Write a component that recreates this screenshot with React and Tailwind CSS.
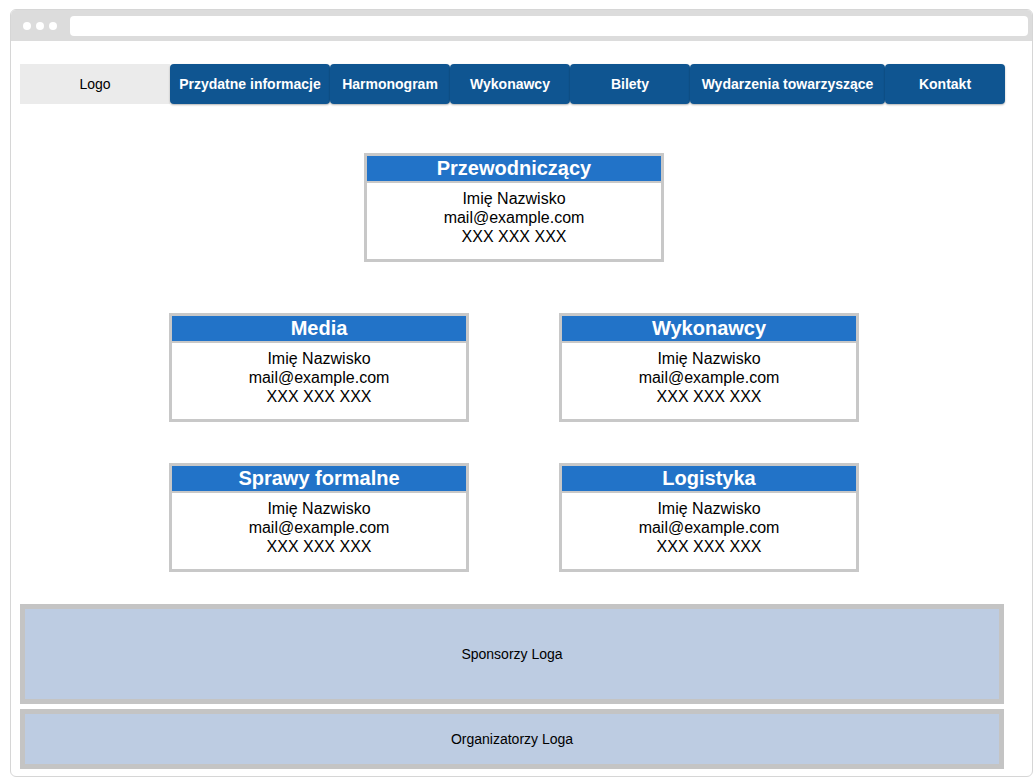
import React from 'react';

const navItems = [
  { label: 'Przydatne informacje', w: 'w-[160px]' },
  { label: 'Harmonogram', w: 'w-[120px]' },
  { label: 'Wykonawcy', w: 'w-[120px]' },
  { label: 'Bilety', w: 'w-[120px]' },
  { label: 'Wydarzenia towarzyszące', w: 'w-[195px]' },
  { label: 'Kontakt', w: 'w-[120px]' },
];

const Card = ({ title }) => (
  <div className="w-[300px] h-[109px] border-[3px] border-[#c8c8c8] bg-white flex flex-col">
    <div className="h-[27px] bg-[#2273c8] border-b-2 border-[#c8c8c8] text-white font-bold text-[20px] leading-[25px] text-center">
      {title}
    </div>
    <div className="pt-[6px] text-[16px] leading-[19px] text-black text-center">
      <div>Imię Nazwisko</div>
      <div>mail@example.com</div>
      <div>XXX XXX XXX</div>
    </div>
  </div>
);

export default function App() {
  return (
    <div className="w-[1035px] h-[783px] bg-white pt-[9px] pl-[10px] font-['Liberation_Sans',Arial,sans-serif]">
      <div className="w-[1023px] h-[768px] border border-[#d6d6d6] rounded-md overflow-hidden flex flex-col">
        {/* Browser chrome */}
        <div className="h-[31px] bg-[#dcdcdc] flex items-center pl-[12px] pr-[4px] gap-[5px] shrink-0">
          <span className="w-[8px] h-[8px] rounded-full bg-white" />
          <span className="w-[8px] h-[8px] rounded-full bg-white" />
          <span className="w-[8px] h-[8px] rounded-full bg-white" />
          <div className="ml-[8px] flex-1 h-[20px] bg-white rounded-[4px]" />
        </div>

        <div className="pl-[9px] pt-[23px] w-[995px]">
          {/* Nav */}
          <nav className="flex h-[40px]">
            <div className="w-[150px] bg-[#ebebeb] flex items-center justify-center text-[14px] text-black">
              Logo
            </div>
            {navItems.map((item) => (
              <div
                key={item.label}
                className={`${item.w} bg-[#0f5591] rounded-[4px] shadow-[0_1px_2px_rgba(0,0,0,0.3)] flex items-center justify-center text-white font-bold text-[14px]`}
              >
                {item.label}
              </div>
            ))}
          </nav>

          {/* Org chart */}
          <div className="flex flex-col items-center pl-[2px]">
            <div className="mt-[49px]">
              <Card title="Przewodniczący" />
            </div>
            <div className="mt-[51px] flex gap-[90px]">
              <Card title="Media" />
              <Card title="Wykonawcy" />
            </div>
            <div className="mt-[41px] flex gap-[90px]">
              <Card title="Sprawy formalne" />
              <Card title="Logistyka" />
            </div>
          </div>

          {/* Footers */}
          <div className="mt-[32px] w-[984px] h-[100px] border-[5px] border-[#c4c4c4] bg-[#bdcce2] flex items-center justify-center text-[14px] text-black">
            Sponsorzy Loga
          </div>
          <div className="mt-[5px] w-[984px] h-[60px] border-[5px] border-[#c4c4c4] bg-[#bdcce2] flex items-center justify-center text-[14px] text-black">
            Organizatorzy Loga
          </div>
        </div>
      </div>
    </div>
  );
}
